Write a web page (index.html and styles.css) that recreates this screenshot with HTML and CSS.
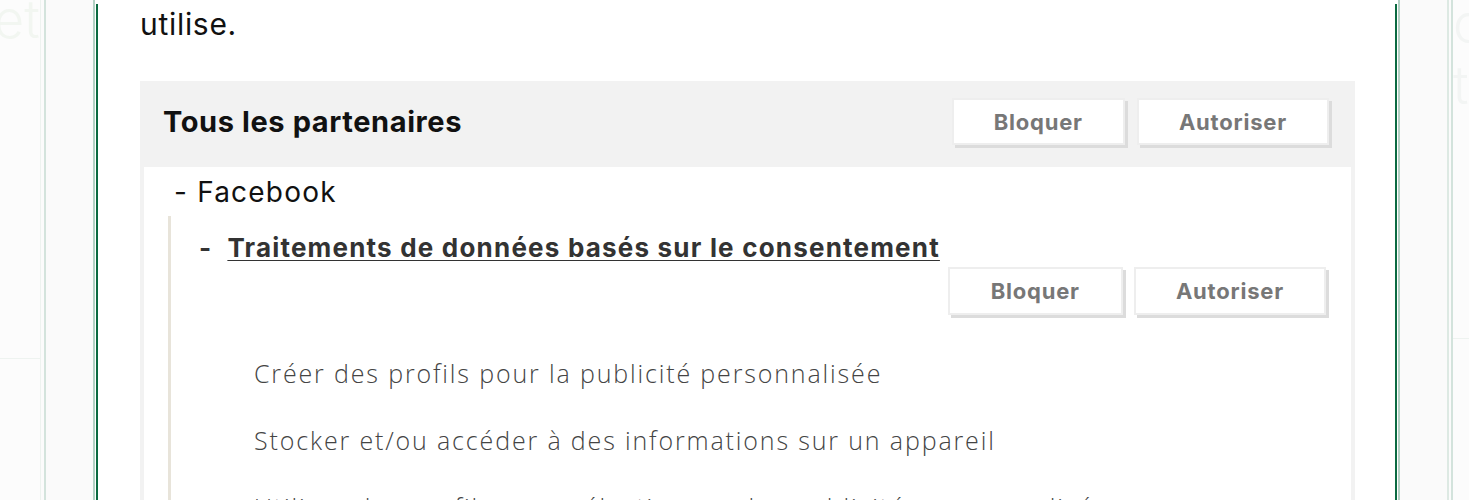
FILE: index.html
```html
<!DOCTYPE html>
<html lang="fr">
<head>
<meta charset="utf-8">
<title>Partenaires</title>
<link rel="stylesheet" href="styles.css">
</head>
<body>
<div class="page">
  <aside class="gutter gutter-left">
    <div class="g-outer">
      <span class="ghost ghost-left">et</span>
      <div class="ghost-rule"></div>
    </div>
    <div class="g-gap"></div>
    <div class="g-line"></div>
    <div class="g-fill"></div>
  </aside>

  <div class="frame">
    <main class="modal">
      <p class="lead">utilise.</p>

      <section class="panel">
        <header class="panel-head">
          <h2 class="panel-title">Tous les partenaires</h2>
          <div class="btns">
            <button class="btn">Bloquer</button>
            <button class="btn">Autoriser</button>
          </div>
        </header>

        <div class="panel-body">
          <div class="vendor-name">- Facebook</div>
          <div class="purposes">
            <div class="purpose-head">
              <span class="dash">-</span>
              <a class="purpose-title" href="#">Traitements de données basés sur le consentement</a>
            </div>
            <div class="btns btns-sub">
              <button class="btn">Bloquer</button>
              <button class="btn">Autoriser</button>
            </div>
            <ul class="purpose-list">
              <li>Créer des profils pour la publicité personnalisée</li>
              <li>Stocker et/ou accéder à des informations sur un appareil</li>
              <li>Utiliser des profils pour sélectionner des publicités personnalisées</li>
            </ul>
          </div>
        </div>
      </section>
    </main>
  </div>

  <aside class="gutter gutter-right">
    <div class="g-fill-r"></div>
    <div class="g-line g-line-faint"></div>
    <div class="g-gap2"></div>
    <div class="g-line"></div>
    <div class="g-outer-r">
      <span class="ghost ghost-r1">oc</span>
      <span class="ghost ghost-r2">ti</span>
      <div class="ghost-rule ghost-rule-r"></div>
    </div>
  </aside>
</div>
</body>
</html>
```

FILE: styles.css
```css
* { box-sizing: border-box; }

html, body {
  margin: 0;
  height: 500px;
  overflow: hidden;
}

body {
  background: #fbfbfb;
  font-family: Inter, "Noto Sans", "Liberation Sans", sans-serif;
  color: #111;
}

.page {
  display: flex;
  height: 500px;
}

/* ---------- gutters ---------- */
.gutter {
  display: flex;
  height: 500px;
  flex: none;
}

.gutter-left { width: 93px; }
.gutter-right { width: 69px; }

.g-outer {
  width: 41px;
  border-right: 1px solid #edf3ef;
  overflow: hidden;
  background: #fcfcfc;
}

.g-gap { width: 3px; }
.g-gap2 { width: 2px; }

.g-line {
  width: 2px;
  background: #d3e3dc;
}

.g-line-faint { background: #dde9e3; }

.g-fill { flex: 1; background: #fafafa; }
.g-fill-r { width: 47px; background: #fafafa; }

.g-outer-r {
  flex: 1;
  overflow: hidden;
  background: #fcfcfc;
  display: flex;
  flex-direction: column;
}

.ghost {
  display: block;
  font-size: 52px;
  font-weight: 300;
  line-height: 40px;
  color: #f2f6f1;
  white-space: nowrap;
}

.ghost-left { margin: 0 0 0 -6px; }
.ghost-r1 { margin-top: 4px; color: #f3f5f4; }
.ghost-r2 { margin-top: 22px; color: #f3f5f4; }

.ghost-rule {
  height: 1px;
  background: #eef3f0;
  margin-top: 318px;
}

.ghost-rule-r { margin-top: 232px; }

/* ---------- modal ---------- */
.frame {
  width: 1307px;
  flex: none;
  border-left: 2px solid #b3d1c4;
  border-right: 2px solid #b3d1c4;
  padding: 0 1px;
  background: #fff;
}

.modal {
  height: 100%;
  border-left: 2px solid #0b6a41;
  border-right: 2px solid #0b6a41;
  padding: 0 40px 0 42px;
  background: #fff;
}

.lead {
  margin: 4px 0 0;
  font-size: 30px;
  line-height: 40px;
  letter-spacing: 0.7px;
  color: #111;
}

/* ---------- panel ---------- */
.panel {
  margin-top: 37px;
  background: #f2f2f2;
  padding: 0 4px;
  height: 600px;
}

.panel-head {
  display: flex;
  align-items: center;
  justify-content: space-between;
  padding: 17px 22px 22px 19px;
}

.panel-title {
  margin: 0;
  font-size: 29px;
  font-weight: 700;
  letter-spacing: 0.6px;
  color: #111;
}

.btns {
  display: flex;
  gap: 12px;
}

.btn {
  font-family: inherit;
  font-size: 22px;
  font-weight: 700;
  letter-spacing: 0.8px;
  color: #777;
  background: #fff;
  border: 2px solid #eeeeee;
  box-shadow: 3px 3px 0 #dcdcdc;
  height: 47px;
  padding: 0 40px;
  cursor: pointer;
}

.panel-body {
  background: #fff;
  height: 100%;
  padding-top: 5px;
}

.vendor-name {
  padding-left: 30px;
  font-size: 28px;
  line-height: 40px;
  letter-spacing: 1.2px;
  color: #111;
}

.purposes {
  margin: 4px 0 0 24px;
  border-left: 3px solid #e8e4da;
  padding: 14px 25px 0 28px;
  height: 400px;
}

.purpose-head {
  display: flex;
  align-items: baseline;
  gap: 15px;
  font-size: 26px;
  line-height: 36px;
  font-weight: 700;
  letter-spacing: 1.2px;
  color: #333;
}

.dash { color: #333; }

.purpose-title {
  color: #333;
  text-decoration: underline;
  text-decoration-thickness: 1px;
  text-underline-offset: 3px;
}

.btns-sub {
  justify-content: flex-end;
  margin-top: 1px;
  gap: 11px;
}

.btns-sub .btn { height: 48px; padding: 0 41px; }
.btns-sub .btn + .btn { padding: 0 40px; }

.purpose-list {
  list-style: none;
  margin: 25px 0 0;
  padding: 0 0 0 55px;
}

.purpose-list li {
  padding: 16px 0;
  line-height: 35px;
  font-family: "Open Sans", Inter, sans-serif;
  font-size: 25px;
  font-weight: 300;
  letter-spacing: 1.85px;
  color: #444;
}
```
